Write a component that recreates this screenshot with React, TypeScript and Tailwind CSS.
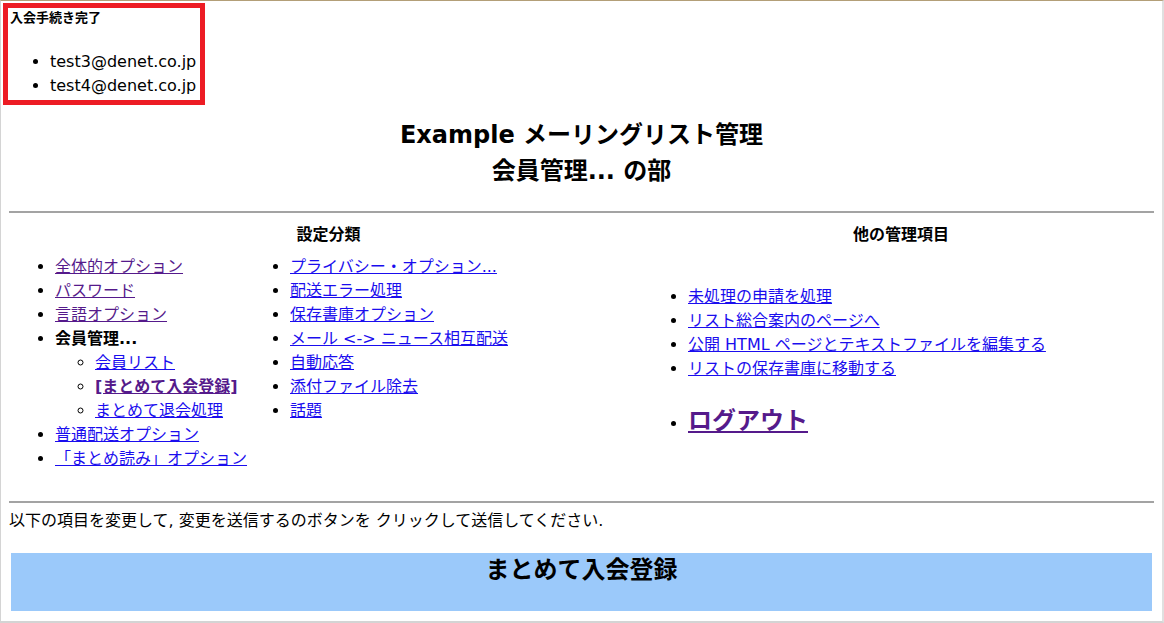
const visited = 'text-[#551a8b] underline';
const link = 'text-[#1a0dee] underline';

export default function App() {
  return (
    <div className="h-[623px] overflow-hidden bg-white border-t border-t-[#b39f78] border-l border-r-2 border-b-2 border-l-[#d4d4d4] border-r-[#e0e0e0] border-b-[#d4d4d4] text-black font-['DejaVu_Sans','Noto_Sans_CJK_JP',sans-serif]">
      {/* completion notice */}
      <div className="ml-[2px] mt-[2px] w-[202px] border-[5px] border-[#ed1c24] px-[2px] pt-[2px] pb-[2px]">
        <div className="text-[13px] leading-4 font-bold">入会手続き完了</div>
        <ul className="mt-6 list-disc pl-10 text-[16px] leading-6">
          <li>test3@denet.co.jp</li>
          <li>test4@denet.co.jp</li>
        </ul>
      </div>

      <div className="px-2">
        <div className="mt-3 text-center text-[24px] leading-9 font-bold">
          <div>Example メーリングリスト管理</div>
          <div>会員管理... の部</div>
        </div>

        <hr className="mt-[22px] border-0 border-t-2 border-[#a3a3a3]" />

        <div className="grid grid-cols-[639px_1fr]">
          <div>
            <div className="mt-3 text-center text-[16px] leading-5 font-bold">設定分類</div>
            <div className="mt-[10px] flex pl-[6px] text-[16px] leading-6">
              <ul className="w-[235px] list-disc pl-10">
                <li><a className={visited}>全体的オプション</a></li>
                <li><a className={visited}>パスワード</a></li>
                <li><a className={visited}>言語オプション</a></li>
                <li>
                  <span className="font-bold">会員管理...</span>
                  <ul className="list-[circle] pl-10">
                    <li><a className={link}>会員リスト</a></li>
                    <li><a className={`${visited} font-bold`}>[まとめて入会登録]</a></li>
                    <li><a className={link}>まとめて退会処理</a></li>
                  </ul>
                </li>
                <li><a className={link}>普通配送オプション</a></li>
                <li><a className={link}>「まとめ読み」オプション</a></li>
              </ul>
              <ul className="list-disc pl-10">
                <li><a className={link}>プライバシー・オプション...</a></li>
                <li><a className={link}>配送エラー処理</a></li>
                <li><a className={link}>保存書庫オプション</a></li>
                <li><a className={link}>メール &lt;-&gt; ニュース相互配送</a></li>
                <li><a className={link}>自動応答</a></li>
                <li><a className={link}>添付ファイル除去</a></li>
                <li><a className={link}>話題</a></li>
              </ul>
            </div>
          </div>

          <div>
            <div className="mt-3 text-center text-[16px] leading-5 font-bold">他の管理項目</div>
            <ul className="mt-10 list-disc pl-10 text-[16px] leading-6">
              <li><a className={link}>未処理の申請を処理</a></li>
              <li><a className={link}>リスト総合案内のページへ</a></li>
              <li><a className={link}>公開 HTML ページとテキストファイルを編集する</a></li>
              <li><a className={link}>リストの保存書庫に移動する</a></li>
              <li className="mt-6 leading-8">
                <a className={`${visited} text-[24px] font-bold`}>ログアウト</a>
              </li>
            </ul>
          </div>
        </div>

        <hr className="mt-[30px] border-0 border-t-2 border-[#a3a3a3]" />

        <p className="mt-[6px] text-[16px] leading-6">
          以下の項目を変更して, 変更を送信するのボタンを クリックして送信してください.
        </p>

        <div className="mx-[2px] mt-5 h-[58px] bg-[#9bc9fa] pt-[2px] text-center">
          <h2 className="text-[24px] leading-[30px] font-bold">まとめて入会登録</h2>
        </div>
      </div>
    </div>
  );
}
